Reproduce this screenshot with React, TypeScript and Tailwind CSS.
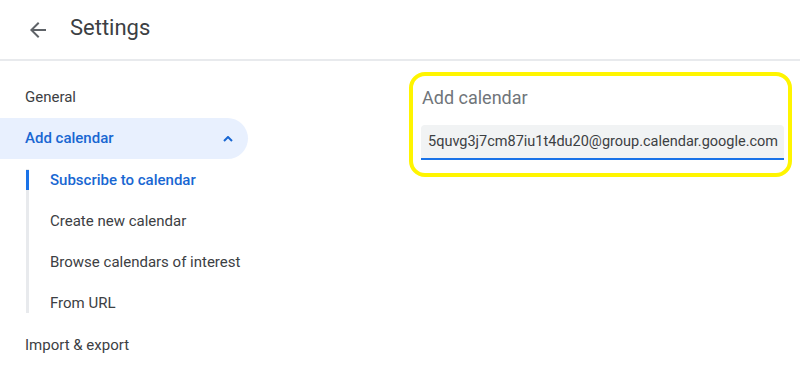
import React from "react";

export default function App() {
  const font = { fontFamily: "Roboto, 'Liberation Sans', sans-serif" };
  return (
    <div className="w-[800px] h-[372px] bg-white overflow-hidden" style={font}>
      <header className="h-[61px] flex items-center border-b-2 border-[#e8eaed]">
        <div className="ml-[26px] w-6 h-6 flex items-center justify-center">
          <svg width="24" height="24" viewBox="0 0 24 24" fill="#5f6368">
            <path d="M20 11H7.83l5.59-5.59L12 4l-8 8 8 8 1.41-1.41L7.83 13H20v-2z" />
          </svg>
        </div>
        <div className="ml-[20px] text-[22px] text-[#3c4043] leading-7 -mt-[3px]">Settings</div>
      </header>
      <div className="flex">
        <nav className="w-[248px] pt-[16px] flex flex-col text-[15px]">
          <div className="h-[41px] flex items-center pl-[25px] text-[#3c4043]">General</div>
          <div className="h-[41px] flex items-center justify-between pl-[25px] pr-[15px] bg-[#e8f0fe] rounded-r-full text-[#1967d2] font-medium">
            <span>Add calendar</span>
            <svg width="10" height="6" viewBox="0 0 10 6" fill="none" stroke="#1967d2" strokeWidth="2">
              <path d="M1 5l4-4 4 4" />
            </svg>
          </div>
          <div className="ml-[26px] my-[10px] border-l-[3px] border-[#e8eaed] flex flex-col">
            <div className="relative h-[41px] -mt-[10px] pt-[1px] flex items-center pl-[21px] text-[#1967d2] font-medium">
              <div className="absolute -left-[3px] top-[11px] w-[3px] h-[20px] bg-[#1a73e8]" />
              Subscribe to calendar
            </div>
            <div className="h-[41px] pt-[1px] flex items-center pl-[21px] text-[#3c4043]">Create new calendar</div>
            <div className="h-[41px] pt-[1px] flex items-center pl-[21px] text-[#3c4043]">Browse calendars of interest</div>
            <div className="h-[41px] pt-[2px] -mb-[10px] flex items-center pl-[21px] text-[#3c4043]">From URL</div>
          </div>
          <div className="h-[41px] pt-[3px] flex items-center pl-[25px] text-[#3c4043]">Import &amp; export</div>
        </nav>
        <main className="ml-[161px] mt-[11px]">
          <div className="w-[383px] h-[105px] border-4 border-[#fff500] rounded-[16px] pl-[8px] pr-[4px] pt-[10px]">
            <div className="text-[18px] leading-6 text-[#70757a] pl-[1px]">Add calendar</div>
            <div className="mt-[15px] h-[35px] bg-[#f1f3f4] rounded-t-[4px] border-b-2 border-[#1a73e8] flex items-center pl-[7px] text-[14.5px] text-[#3c4043] whitespace-nowrap overflow-hidden">
              5quvg3j7cm87iu1t4du20@group.calendar.google.com
            </div>
          </div>
        </main>
      </div>
    </div>
  );
}
